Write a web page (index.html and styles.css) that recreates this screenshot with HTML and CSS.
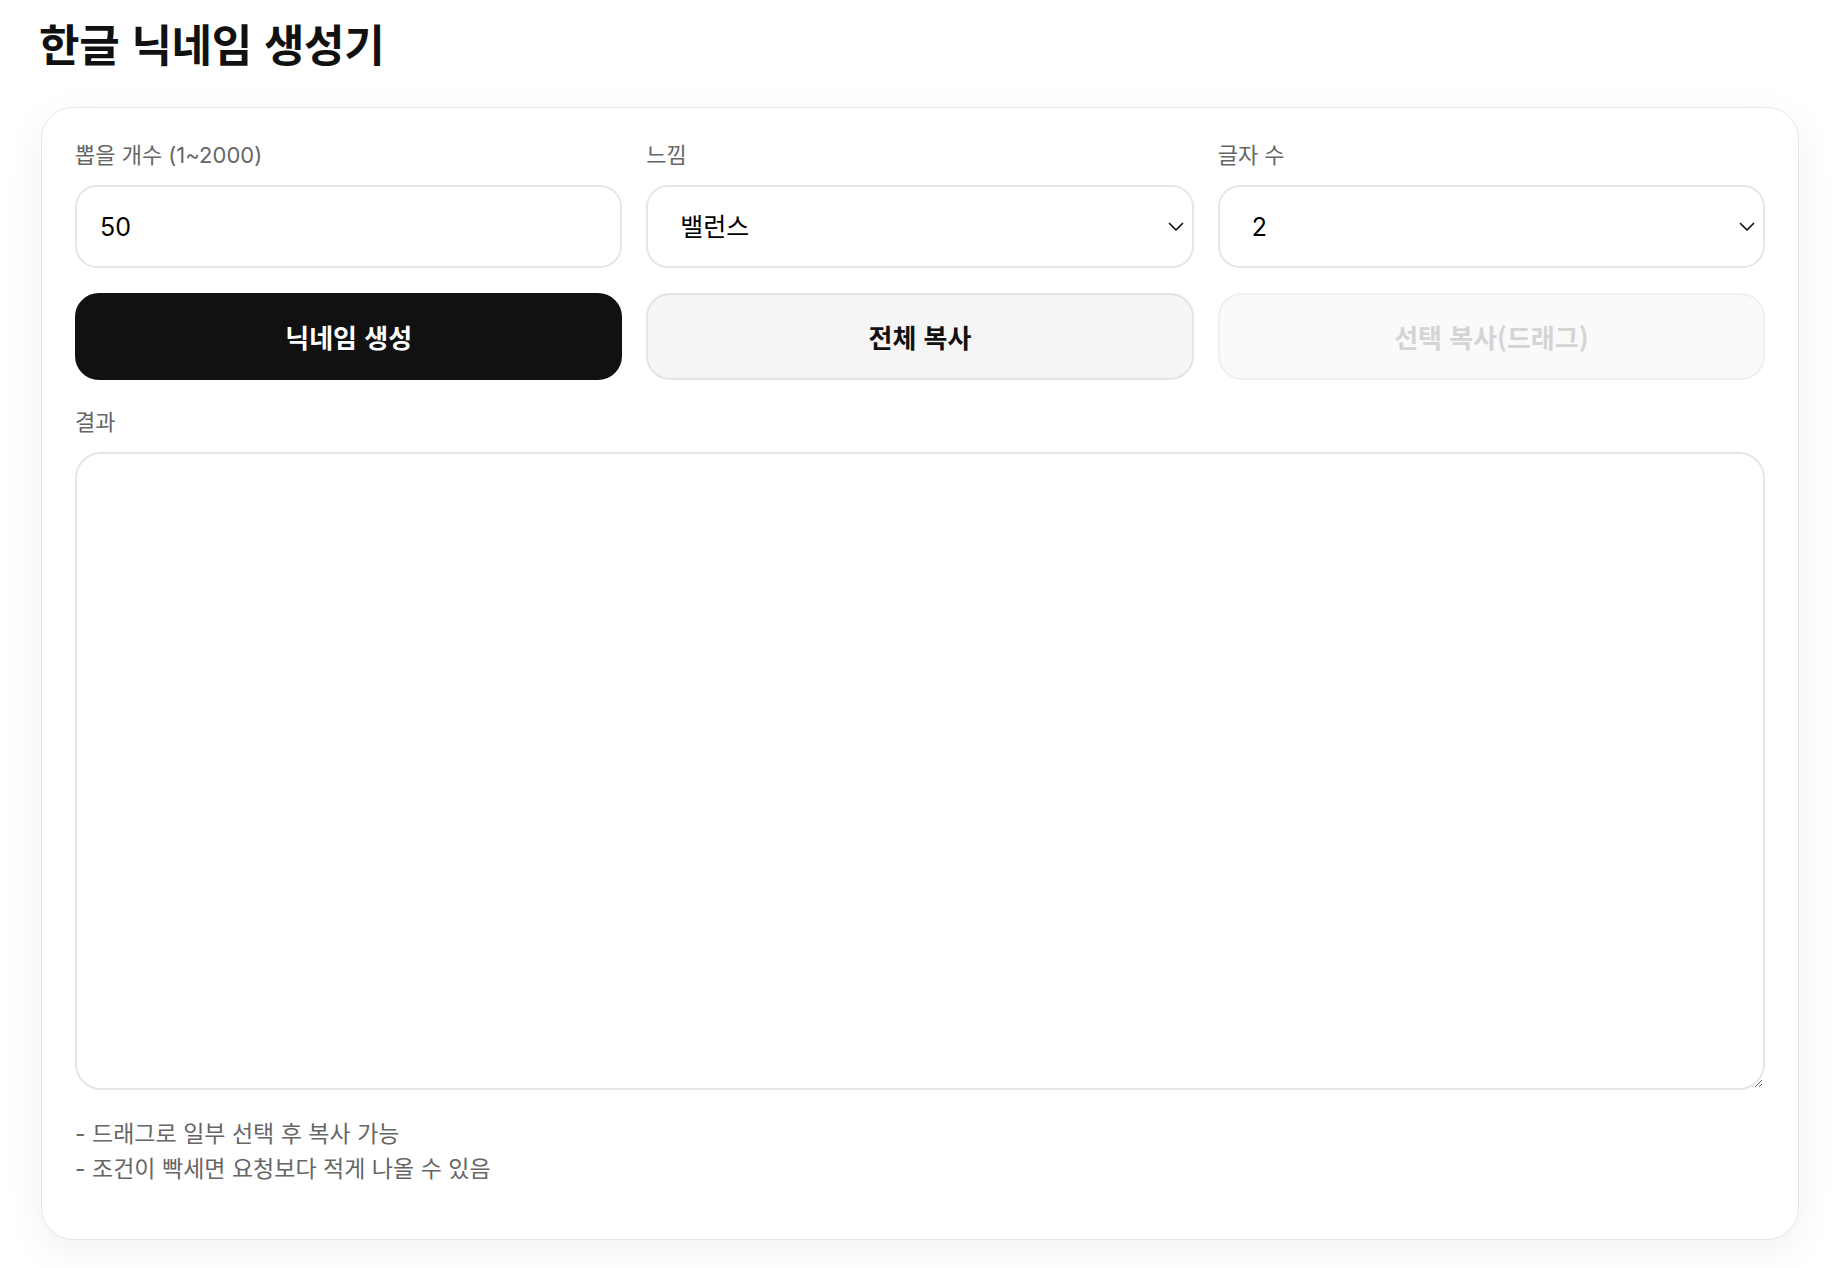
FILE: index.html
```html
<!DOCTYPE html>
<html lang="ko">
<head>
<meta charset="utf-8">
<title>한글 닉네임 생성기</title>
<link rel="stylesheet" href="styles.css">
</head>
<body>
<div class="page">
  <h1 class="title">한글 닉네임 생성기</h1>
  <section class="card">
    <div class="controls">
      <label class="field">
        <span class="label">뽑을 개수 (1~2000)</span>
        <input class="control" type="number" value="50" min="1" max="2000">
      </label>
      <label class="field">
        <span class="label">느낌</span>
        <select class="control select">
          <option>밸런스</option>
        </select>
      </label>
      <label class="field">
        <span class="label">글자 수</span>
        <select class="control select">
          <option>2</option>
        </select>
      </label>
      <button class="btn btn-primary" type="button">닉네임 생성</button>
      <button class="btn btn-secondary" type="button">전체 복사</button>
      <button class="btn btn-disabled" type="button" disabled>선택 복사(드래그)</button>
    </div>
    <div class="result">
      <span class="label">결과</span>
      <textarea class="output"></textarea>
    </div>
    <div class="notes">
      <div>- 드래그로 일부 선택 후 복사 가능</div>
      <div>- 조건이 빡세면 요청보다 적게 나올 수 있음</div>
    </div>
  </section>
</div>
</body>
</html>
```

FILE: styles.css
```css
* { box-sizing: border-box; }

html, body {
  margin: 0;
  background: #ffffff;
}

body {
  font-family: "Inter", "Noto Sans CJK KR", sans-serif;
  color: #111111;
}

.page {
  padding: 13px 37px 28px 41px;
}

.title {
  margin: 0 0 34px -2px;
  font-family: "Noto Sans CJK KR", sans-serif;
  font-size: 44px;
  line-height: 60px;
  font-weight: 700;
  color: #111111;
  letter-spacing: -0.3px;
}

.card {
  border: 1px solid #e6e6e6;
  border-radius: 32px;
  background: #ffffff;
  padding: 32px 33px 52px 33px;
  box-shadow: 0 10px 40px rgba(0, 0, 0, 0.06);
}

.controls {
  display: grid;
  grid-template-columns: repeat(3, 1fr);
  column-gap: 24px;
  row-gap: 25px;
}

.field {
  display: flex;
  flex-direction: column;
}

.label {
  display: block;
  font-size: 22px;
  line-height: 31px;
  color: #666666;
  margin-bottom: 14px;
}

.control {
  height: 83px;
  width: 100%;
  border: 2px solid #e6e6e6;
  border-radius: 22px;
  background: #ffffff;
  font-family: "Inter", "Noto Sans CJK KR", sans-serif;
  font-size: 25px;
  color: #000000;
  padding: 0 23px;
  outline: none;
}

.control::-webkit-inner-spin-button,
.control::-webkit-outer-spin-button {
  -webkit-appearance: none;
  margin: 0;
}

.select {
  -webkit-appearance: none;
  appearance: none;
  padding: 0 50px 0 32px;
  background-image: url("data:image/svg+xml;utf8,<svg xmlns='http://www.w3.org/2000/svg' width='16' height='10' viewBox='0 0 16 10'><polyline points='1.5,1.5 8,8 14.5,1.5' fill='none' stroke='%23111' stroke-width='1.7' stroke-linecap='round' stroke-linejoin='round'/></svg>");
  background-repeat: no-repeat;
  background-position: right 8px center;
  background-size: 16px 10px;
}

.btn {
  height: 87px;
  border-radius: 24px;
  font-family: "Noto Sans CJK KR", sans-serif;
  font-size: 26px;
  font-weight: 700;
  cursor: pointer;
}

.btn-primary {
  background: #111111;
  color: #ffffff;
  border: 2px solid #111111;
}

.btn-secondary {
  background: #f5f5f5;
  color: #111111;
  border: 2px solid #e4e4e4;
}

.btn-disabled {
  background: #fafafa;
  color: #d4d4d4;
  border: 2px solid #f0f0f0;
  cursor: default;
}

.result {
  margin-top: 27px;
}

.output {
  display: block;
  width: 100%;
  height: 638px;
  border: 2px solid #e6e6e6;
  border-radius: 26px;
  background: #ffffff;
  padding: 20px 25px;
  font-family: "Inter", "Noto Sans CJK KR", sans-serif;
  font-size: 22px;
  outline: none;
}

.notes {
  margin-top: 27px;
  font-size: 23px;
  line-height: 35px;
  color: #666666;
}
```
